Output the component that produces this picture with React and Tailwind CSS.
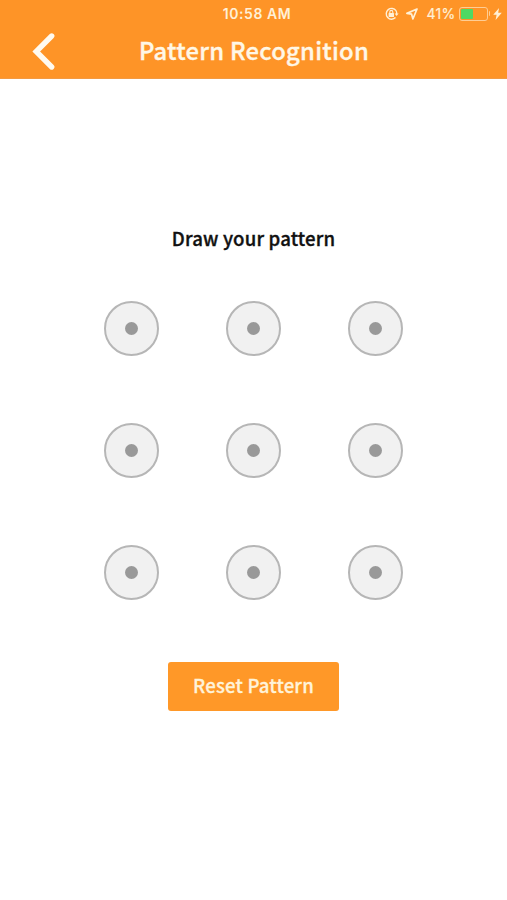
const NODES = Array.from({ length: 9 }, (_, i) => i);

function StatusBar() {
  return (
    <div className="grid h-[27px] grid-cols-[1fr_auto_1fr] items-center pl-[7px] font-['Inter','Liberation_Sans',sans-serif] text-[#fff0d6]">
      <span />
      <span className="text-[14px] leading-none font-semibold tracking-[0.55px]">10:58 AM</span>
      <div className="flex items-center justify-end pr-[5px]">
        <svg className="mr-[7px] h-[14px] w-[14px]" viewBox="0 0 14 14" fill="none" stroke="currentColor">
          <path d="M11 3.6A5.4 5.4 0 1 0 10.5 10.6" strokeWidth="1.4" />
          <path d="M9.6 6.5h4L11.6 9z" fill="currentColor" stroke="none" />
          <path d="M10.9 3.5Q11.9 5 11.7 7" strokeWidth="1.3" />
          <rect x="3.6" y="6" width="5.4" height="4" rx="0.5" fill="currentColor" stroke="none" />
          <path d="M4.8 6.3V4.9a1.5 1.5 0 0 1 3 0v1.4" strokeWidth="1.1" />
        </svg>
        <svg className="mr-[8px] h-[12px] w-[12px]" viewBox="0 0 12 12" fill="none" stroke="currentColor" strokeWidth="1.7" strokeLinejoin="round">
          <path d="M11 1L0.9 5.4 5.6 6.2 6.9 11z" />
        </svg>
        <span className="mr-[3px] text-[14px] leading-none tracking-[0.3px] [-webkit-text-stroke:0.2px_#fff0d6]">41%</span>
        <div className="flex h-[14px] w-[29px] rounded-[3px] border border-[#ffcd94] p-[1px]">
          <div className="w-[12px] rounded-[1px] bg-[#4fd963]" />
        </div>
        <span className="ml-[1px] h-[5px] w-[1.5px] rounded-r-full bg-[#ffcd94]" />
        <svg className="ml-[3px] h-[12px] w-[9px]" viewBox="0 0 8 12" fill="currentColor" preserveAspectRatio="none">
          <path d="M5.4 0L0.2 6.8h3L2.3 12 7.8 4.8H4.6z" />
        </svg>
      </div>
    </div>
  );
}

export default function App() {
  return (
    <div className="flex h-[900px] w-[507px] flex-col overflow-hidden bg-white font-['Source_Sans_Pro','Noto_Sans_CJK_SC',sans-serif]">
      <header className="h-[79px] shrink-0 border-b border-[#f39a42] bg-[#fe9427]">
        <StatusBar />
        <div className="grid h-[46px] grid-cols-[70px_1fr_69px] items-center">
          <button className="flex pt-[2px] pl-[31px]" aria-label="Back">
            <svg className="h-[40px] w-[25px]" viewBox="0 0 25 40" fill="none" stroke="#fffaf0" strokeWidth="5.4" strokeLinecap="round">
              <path d="M20.7 5L5.2 20.5 20.7 36" strokeLinejoin="miter" />
            </svg>
          </button>
          <h1 className="text-center text-[23.8px] leading-none font-medium tracking-[0.25px] whitespace-nowrap text-[#fff7e6] [-webkit-text-stroke:0.35px_#fff7e6]">Pattern Recognition</h1>
        </div>
      </header>
      <main className="flex flex-col items-center pt-[145px]">
        <h2 className="h-[28px] text-[18.6px] leading-[28px] font-medium tracking-[0.17px] whitespace-nowrap text-[#111] [-webkit-text-stroke:0.35px_#111]">Draw your pattern</h2>
        <div className="mt-[49px] grid grid-cols-3 gap-x-[67.4px] gap-y-[67.1px]">
          {NODES.map((n) => (
            <div key={n} className="flex h-[55px] w-[55px] items-center justify-center rounded-full border-2 border-[#b6b6b6] bg-[#f1f1f1]">
              <div className="h-[13px] w-[13px] rounded-full bg-[#999]" />
            </div>
          ))}
        </div>
        <button className="mt-[62px] h-[49px] w-[171px] rounded-[3px] bg-[#ff9828] pb-[3px] text-[18.6px] leading-none font-medium tracking-[0.17px] whitespace-nowrap text-[#fff3d9] [-webkit-text-stroke:0.3px_#fff3d9]">Reset Pattern</button>
      </main>
    </div>
  );
}
